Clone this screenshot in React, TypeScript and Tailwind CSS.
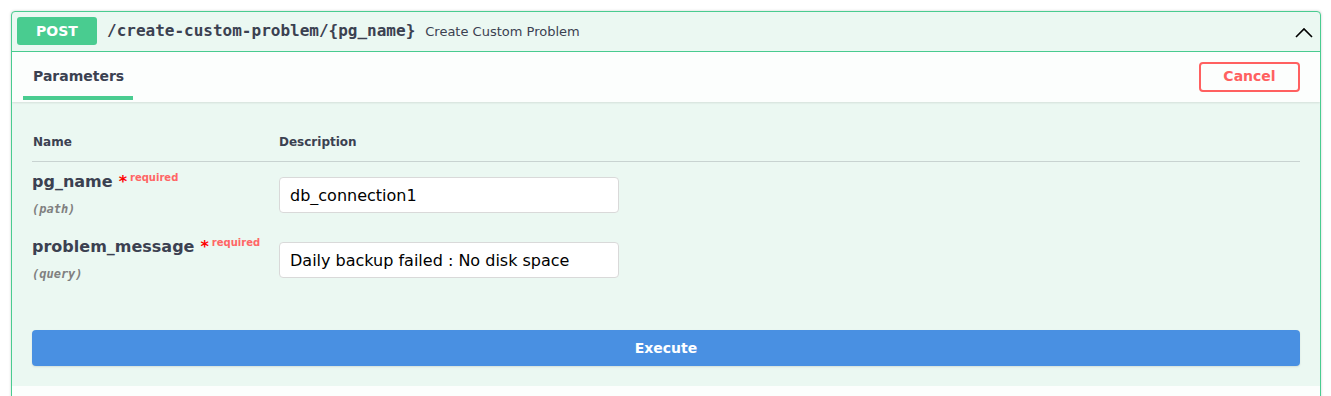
import { useState } from 'react';

function ChevronUp() {
  return (
    <svg width="18" height="11" viewBox="0 0 18 11" fill="none" stroke="#000" strokeWidth={1.6}>
      <path d="M1 10 L9 2 L17 10" />
    </svg>
  );
}

type Param = { name: string; where: string; value: string };

const params: Param[] = [
  { name: 'pg_name', where: '(path)', value: 'db_connection1' },
  { name: 'problem_message', where: '(query)', value: 'Daily backup failed : No disk space' },
];

function ParamRow({ p }: { p: Param }) {
  const [value, setValue] = useState(p.value);
  return (
    <div className="flex h-[65px]">
      <div className="w-[247px] pt-[10px]">
        <div className="flex items-start leading-[19px]">
          <span className="text-[16px] font-bold text-[#3b4151]">{p.name}</span>
          <span className="ml-[6px] text-[16px] font-bold leading-[20px] text-[#ff0000]">*</span>
          <span className="ml-[3px] -mt-[4px] text-[10px] font-bold text-[#ff6666]">required</span>
        </div>
        <div className="mt-[10px] text-[12px] leading-[15px] italic font-bold text-[#808080] font-['DejaVu_Sans_Mono',monospace]">
          {p.where}
        </div>
      </div>
      <div className="pt-[15px]">
        <input
          value={value}
          onChange={(e) => setValue(e.target.value)}
          className="h-[36px] w-[340px] rounded-[4px] border border-[#d9d9d9] bg-white px-[10px] text-[16px] text-black outline-none font-['DejaVu_Sans',sans-serif]"
        />
      </div>
    </div>
  );
}

export default function App() {
  return (
    <div className="min-h-screen bg-white pt-[11px] font-['DejaVu_Sans',sans-serif] text-[#3b4151]">
      <div className="ml-[11px] w-[1310px] overflow-hidden rounded-[4px] border border-[#49cc90] bg-[#ebf8f2] shadow-[0_0_3px_rgba(0,0,0,0.19)]">
        {/* summary */}
        <div className="flex h-[40px] items-start border-b border-[#49cc90] pl-[5px] pt-[5px] pr-[7px]">
          <div className="flex h-[28px] w-[80px] items-center justify-center rounded-[3px] bg-[#49cc90] text-[14px] font-bold text-white">
            POST
          </div>
          <span className="ml-[10px] mt-[4px] text-[16px] leading-[20px] font-bold font-['DejaVu_Sans_Mono',monospace]">
            /create-custom-problem/{'{pg_name}'}
          </span>
          <span className="ml-[10px] mt-[6px] text-[13px] leading-[18px]">Create Custom Problem</span>
          <div className="ml-auto mt-[10px]">
            <ChevronUp />
          </div>
        </div>

        {/* section header */}
        <div className="flex h-[50px] items-center bg-[#fcfefd] pl-[11px] pr-[20px] shadow-[0_1px_2px_rgba(0,0,0,0.1)]">
          <div className="flex h-full flex-col">
            <div className="px-[10px] pt-[14px] text-[14px] leading-[20px] font-bold">Parameters</div>
            <div className="mt-[10px] h-[4px] w-[110px] bg-[#49cc90]" />
          </div>
          <button className="ml-auto -mt-[1px] h-[30px] w-[101px] rounded-[4px] border-2 border-[#ff6060] text-[14px] font-bold text-[#ff6060]">
            Cancel
          </button>
        </div>

        {/* parameters */}
        <div className="px-[20px] pt-[21px] pb-[20px]">
          <div className="flex h-[39px] items-center border-b border-[#3b4151]/20 text-[12px] font-bold">
            <div className="w-[247px] pl-[1px]">Name</div>
            <div>Description</div>
          </div>
          {params.map((p) => (
            <ParamRow key={p.name} p={p} />
          ))}
          <button className="mt-[38px] h-[36px] w-full rounded-[4px] bg-[#4990e2] text-[14px] font-bold text-white shadow-[0_1px_2px_rgba(0,0,0,0.1)]">
            Execute
          </button>
        </div>

        <div className="h-[50px] bg-[#fcfefd]" />
      </div>
    </div>
  );
}
